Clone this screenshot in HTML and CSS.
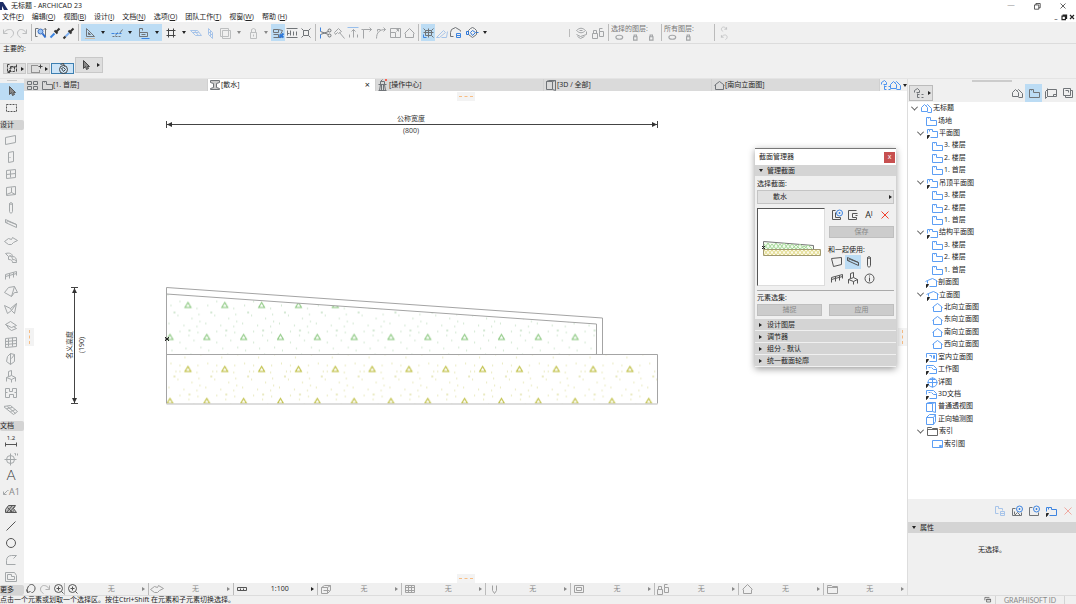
FILE: index.html
```
<!DOCTYPE html>
<html lang="zh-CN">
<head>
<meta charset="utf-8">
<title>无标题 - ARCHICAD 23</title>
<link rel="stylesheet" href="styles.css">
</head>
<body>

<!-- icons, shifted half a pixel so the strokes stay sharp -->
<svg class="defs" width="0" height="0" aria-hidden="true">
  <symbol id="undo" viewBox="-.5 -.5 14 14"><path d="M2 3v4h4M2 7c2-4 5-4 7-4 4 1 4 6 0 8"/></symbol>
  <symbol id="redo" viewBox="-.5 -.5 14 14"><path d="M11 3v4H7M11 7C9 3 6 3 5 3 1 4 1 9 5 11"/></symbol>
  <symbol id="find" viewBox="-.5 -.5 14 14"><path d="M1 2h3M1 2v8h2M11 2v8M9 3l2-1 1 1"/><circle cx="6" cy="5" r="2.500" fill="#9cc4f4" stroke="#3d6fc0"/><path d="M8 7l3 4" stroke="#2f6fd0" stroke-width="2"/></symbol>
  <symbol id="pick" viewBox="-.5 -.5 14 14"><path d="M2 11l4-4" stroke="#3d84e0" stroke-width="2"/><path d="M6 4l3 3M8 5l3-3" stroke="#333" stroke-width="2"/></symbol>
  <symbol id="inject" viewBox="-.5 -.5 14 14"><path d="M3 10l4-4" stroke="#7fb0f0" stroke-width="2"/><path d="M1 12l2-2M6 4l3 3M8 5l3-3" stroke="#333" stroke-width="2"/></symbol>
  <symbol id="ruler" viewBox="-.5 -.5 14 14"><path d="M3 2v8h8zM5 6v2h2z"/><path d="M2 12h10" stroke="#e0a060" stroke-dasharray="1 1"/></symbol>
  <symbol id="guide" viewBox="-.5 -.5 14 14"><path d="M5 9l2-3M9 7l3-4"/><path d="M1 7h10" stroke="#3d84e0" stroke-dasharray="3 1"/><path d="M2 10h8" stroke-dasharray="2 1"/></symbol>
  <symbol id="track" viewBox="-.5 -.5 14 14"><path d="M2 2v8M2 6h8v4H2zM4 8h4M2 2h3v2"/><path d="M4 12h8" stroke="#3d84e0"/></symbol>
  <symbol id="grid" viewBox="-.5 -.5 14 14"><path d="M4 2v9M9 2v9M2 4h9M2 9h9"/></symbol>
  <symbol id="skewh" viewBox="-.5 -.5 14 14"><path d="M1 4h7l4 5H6zM3 6h6M5 4l4 5"/></symbol>
  <symbol id="skewv" viewBox="-.5 -.5 14 14"><path d="M5 2l4 4v6L5 8zM5 5l4 4M7 4v6"/></symbol>
  <symbol id="frame" viewBox="-.5 -.5 14 14"><path d="M1 2h8v8H1zM3 4v8h8V4z"/></symbol>
  <symbol id="lock" viewBox="-.5 -.5 14 14"><path d="M4 6h6v6H4zM5 6V3l2-1 2 1v3M7 8v2"/></symbol>
  <symbol id="trace" viewBox="-.5 -.5 14 14"><path d="M2 3h5v3H2zM2 11h8M7 3l4 1-2 4M2 8h5v3"/><path d="M8 8l4 3M8 11l4-4" stroke="#2f78d8" stroke-width="2"/></symbol>
  <symbol id="measure" viewBox="-.5 -.5 14 14"><path d="M1 2h11M1 11h11M2 4v5M5 4v5M2 7h2M8 5v4M11 5v4"/></symbol>
  <symbol id="cross" viewBox="-.5 -.5 14 14"><path d="M2 2l2 2M11 2L9 4M2 11l2-2M11 11L9 9M4 4h5v5H4z"/></symbol>
  <symbol id="scissors" viewBox="-.5 -.5 14 14"><path d="M2 8l8-3M2 5l8 3"/><circle cx="11" cy="4" r="1.500"/><circle cx="11" cy="9" r="1.500"/><path d="M2 1v4M2 8v4" stroke="#3d84e0"/></symbol>
  <symbol id="axe" viewBox="-.5 -.5 14 14"><path d="M2 6l4-4 3 3-3 2-1-1-2 2zM7 6l5 6"/></symbol>
  <symbol id="adjust" viewBox="-.5 -.5 14 14"><path d="M1 1h11" stroke="#5f9fea"/><path d="M7 3v8M5 5l2-2 2 2M3 8v3M11 8v3"/></symbol>
  <symbol id="corner" viewBox="-.5 -.5 14 14"><path d="M3 12V3h8M9 1l2 2-2 2M1 3h2"/></symbol>
  <symbol id="fillet" viewBox="-.5 -.5 14 14"><path d="M2 12c0-6 3-9 9-9M9 1l2 2-2 2M3 5V3h3"/></symbol>
  <symbol id="resize" viewBox="-.5 -.5 14 14"><path d="M2 2h10v9H2zM2 6h5v5M8 5l2-2M8 3h2v2"/></symbol>
  <symbol id="home" viewBox="-.5 -.5 14 14"><path d="M2 7l5-5 5 5M3 7v4h8V7"/></symbol>
  <symbol id="group" viewBox="-.5 -.5 14 14"><path d="M4 4h6v5H4zM2 2l2 2M12 2l-2 2M12 11l-2-2M7 2v9M2 6h10"/><path d="M2 8v3h3" stroke="#3d84e0"/></symbol>
  <symbol id="pencil" viewBox="-.5 -.5 14 14"><path d="M1 11l7-7 2 2-6 5zM6 11h5l1-6"/></symbol>
  <symbol id="cloud" viewBox="-.5 -.5 14 14"><path d="M4 10H1V6l1-3 4-2 5 3v1"/><path d="M7 7h4v4H7zM7 9h4" stroke="#3d84e0"/></symbol>
  <symbol id="gear" viewBox="-.5 -.5 14 14"><path d="M7 1l2 1 2 2v4l-4 3-4-3V4l2-2z"/><path d="M1 5h2v3H1zM7 4l3 2-3 3-2-3zM11 6h2" stroke="#2f78d8"/></symbol>
  <symbol id="eye" viewBox="-.5 -.5 14 14"><path d="M2 4c3-3 6-3 9 0-3 3-6 3-9 0zM5 4h3M2 8l4 2 6-2V5M3 10l3 2 4-2"/></symbol>
  <symbol id="locks" viewBox="-.5 -.5 14 14"><path d="M1 7h5v5H1zM2 7V4h3v3M8 5h4v5H8zM8 5V2h3"/></symbol>
  <symbol id="oval" viewBox="-.5 -.5 14 14"><ellipse cx="7" cy="7" rx="6" ry="3.500"/></symbol>
  <symbol id="bulb" viewBox="-.5 -.5 14 14"><path d="M4 6h6v6H4zM5 6V3h4v3"/></symbol>
  <symbol id="arrow" viewBox="-.5 -.5 14 14"><path d="M5 2v8l2-2 1 3 2-1-1-2h2z" fill="#888"/></symbol>
  <symbol id="marquee" viewBox="-.5 -.5 14 14"><path d="M2 3h10v7H2z" stroke-dasharray="2 1"/></symbol>
  <symbol id="seln" viewBox="-.5 -.5 14 14"><path d="M2 2v8h2M2 2h2M5 4h4v5H5zM4 6l7-2M11 2v8" stroke-dasharray="3 1"/><path d="M3 10l2-2" stroke-width="2"/></symbol>
  <symbol id="marqadd" viewBox="-.5 -.5 14 14"><path d="M8 3H2v7h8V7" stroke-dasharray="1 1"/><path d="M9 4h4M11 2v4"/></symbol>
  <symbol id="rotate" viewBox="-.5 -.5 14 14"><circle cx="7" cy="7" r="4"/><path d="M5 6l2-1 2 2-2 2zM4 2l3-1 1 3"/></symbol>
  <symbol id="wall" viewBox="-.5 -.5 14 14"><path d="M1 4l10-2v7L1 11z"/></symbol>
  <symbol id="wall2" viewBox="-.5 -.5 14 14"><path d="M1 3l10-1v7L3 11z"/></symbol>
  <symbol id="door" viewBox="-.5 -.5 14 14"><path d="M4 2l5-1v10l-5 1zM5 7h1"/></symbol>
  <symbol id="window" viewBox="-.5 -.5 14 14"><path d="M2 3l9-1v8l-9 1zM6 3v7M2 7l9-1"/></symbol>
  <symbol id="cornerwin" viewBox="-.5 -.5 14 14"><path d="M2 3l9-1v8l-9 1zM7 3v5M2 10l5-2 4 2"/></symbol>
  <symbol id="column" viewBox="-.5 -.5 14 14"><path d="M5 2v8c0 2 3 2 3 0V2c0-1-3-1-3 0 0 1 3 1 3 0"/></symbol>
  <symbol id="beam" viewBox="-.5 -.5 14 14"><path d="M1 2l11 5v3L1 5zM1 5l3-1 8 3"/></symbol>
  <symbol id="slab" viewBox="-.5 -.5 14 14"><path d="M0 7l4-3 3 1 1-2 5 3-4 2-2 2H4z"/></symbol>
  <symbol id="stair" viewBox="-.5 -.5 14 14"><path d="M1 2c4-1 7 0 7 3 3 0 4 2 4 5M1 2l3 3c3-1 4 1 4 3 3 0 4 1 4 3H8C8 9 7 8 4 8V5M5 4l3 1"/></symbol>
  <symbol id="rail" viewBox="-.5 -.5 14 14"><path d="M1 6l11-3M1 6v5M5 5v5M9 4v5M12 3v4M1 8l11-3"/></symbol>
  <symbol id="roof" viewBox="-.5 -.5 14 14"><path d="M0 7l4-5 6-1 3 6h-3l-3 4zM10 1L7 11"/></symbol>
  <symbol id="shell" viewBox="-.5 -.5 14 14"><path d="M0 3l6 3 6-5-2 10-3-3-4 3zM6 6l1 2M12 1L7 8"/></symbol>
  <symbol id="skylight" viewBox="-.5 -.5 14 14"><path d="M1 5l5-3 6 4-5 2zM3 8l4 3 5-2-3-2M1 5l3 3"/></symbol>
  <symbol id="curtain" viewBox="-.5 -.5 14 14"><path d="M1 3l11-1v9L1 12zM4 3v8M8 2v9M1 6l11-1M1 9l11-1"/></symbol>
  <symbol id="morph" viewBox="-.5 -.5 14 14"><path d="M6 1l4 1v7l-4 3-4-3 1-5zM6 1v11M10 2L7 6"/></symbol>
  <symbol id="chair" viewBox="-.5 -.5 14 14"><path d="M4 7V2l3-1v5M2 12V8l5-2 4 2v4M2 8l5 2 4-2M7 10v3"/></symbol>
  <symbol id="zone" viewBox="-.5 -.5 14 14"><path d="M1 2h4v3h3V2h4v9H9V8H5v3H1zM1 6h2M10 6h2"/></symbol>
  <symbol id="mesh" viewBox="-.5 -.5 14 14"><path d="M-1 3l7-1 7 6-4 3zM2 5l6-1M6 8l5-2M3 3l8 7"/></symbol>
  <symbol id="dim" viewBox="-.5 -.5 14 14"><path d="M1 9h11M1 7v4M12 7v4"/></symbol>
  <symbol id="level" viewBox="-.5 -.5 14 14"><circle cx="6" cy="7" r="4"/><path d="M6 1v12M0 7h12M10 1h1v2M13 1v2"/></symbol>
  <symbol id="leader" viewBox="-.5 -.5 7 14"><path d="M6 5H5L1 9M1 6v3h3"/></symbol>
  <symbol id="hatch" viewBox="-.5 -.5 14 14"><path d="M1 10V7l3-4h7L9 6l3 4z" fill="#bbb"/><path d="M2 10l6-7M5 10l5-6M8 10l1-2M3 5l5 5"/></symbol>
  <symbol id="line" viewBox="-.5 -.5 14 14"><path d="M2 11l9-9"/></symbol>
  <symbol id="circle" viewBox="-.5 -.5 14 14"><circle cx="6.500" cy="6.500" r="4.500"/></symbol>
  <symbol id="poly" viewBox="-.5 -.5 14 14"><path d="M11 11H2V7c0-3 2-5 5-5h5l-3 3"/></symbol>
  <symbol id="drawing" viewBox="-.5 -.5 14 14"><path d="M1 2h9l2 3v6H1zM3 4h4v2h3v3H3z"/></symbol>
  <symbol id="tabs" viewBox="-.5 -.5 14 14"><path d="M2 3h4v3H2zM8 3h4v3H8zM2 8h4v3H2zM8 8h4v3H8z"/></symbol>
  <symbol id="plan" viewBox="-.5 -.5 14 14"><path d="M2 3h4v3h6v5H2zM4 3v1"/></symbol>
  <symbol id="planlink" viewBox="-.5 -.5 14 14"><path d="M4 3h3v2h5v6H5M2 7V3h2v2"/><path d="M2 12V9h2z" stroke="#222" fill="#222"/></symbol>
  <symbol id="ibeam" viewBox="-.5 -.5 14 14"><path d="M2 2h9v2L8 5v4l3 1v1H2v-1l3-1V5L2 4z" fill="#ccc"/></symbol>
  <symbol id="tower" viewBox="-.5 -.5 14 14"><path d="M4 3h4v3l1 6H3l1-6zM2 6h8M2 12h8M5 6v6M7 6v6M4 3l2-2"/><path d="M9 1h1v1H9z" fill="#f43" stroke="#f43"/></symbol>
  <symbol id="persp" viewBox="-.5 -.5 14 14"><path d="M2 3h6v8H2zM8 3l3-1v10l-3-1M2 3l2-1h7"/></symbol>
  <symbol id="elev" viewBox="-.5 -.5 14 14"><path d="M3 11V6l4-3 4 3v5zM2 7l1-1M11 6l1 1"/></symbol>
  <symbol id="elevlink" viewBox="-.5 -.5 14 14"><path d="M3 8V5l5-2 4 2v6H5M1 6l2-1M12 5l1 1"/><path d="M2 12V9h2z" stroke="#222" fill="#222"/></symbol>
  <symbol id="project" viewBox="-.5 -.5 14 14"><path d="M2 10V6l3-3 3 3v4zM7 4l1-1 4 4v4H8"/></symbol>
  <symbol id="iso" viewBox="-.5 -.5 14 14"><path d="M2 5h7v7H2zM2 5l3-3h6v7l-2 3M9 5l2-3"/></symbol>
  <symbol id="interior" viewBox="-.5 -.5 14 14"><path d="M2 7V3h10v8H5M5 5h2v2M9 5h1v3H9z"/><path d="M2 12V9h2z" stroke="#222" fill="#222"/></symbol>
  <symbol id="detail" viewBox="-.5 -.5 14 14"><circle cx="8" cy="7" r="4.500"/><path d="M3 7h10M8 2v10M5 4h6"/><path d="M2 12V9h2z" stroke="#222" fill="#222"/></symbol>
  <symbol id="work" viewBox="-.5 -.5 14 14"><path d="M2 7V3h7l3 3v5H5M7 5l2 2h3M4 5h2"/><path d="M2 12V9h2z" stroke="#222" fill="#222"/></symbol>
  <symbol id="folder" viewBox="-.5 -.5 14 14"><path d="M2 4V3h4l1 1h5v7H2zM2 5h10"/></symbol>
  <symbol id="index" viewBox="-.5 -.5 14 14"><path d="M2 3h10v7H2zM9 8h2v1H9z"/></symbol>
  <symbol id="layout" viewBox="-.5 -.5 14 14"><path d="M3 2v8h9V3H3L1 5v7l2-2M9 10V8h3"/></symbol>
  <symbol id="book" viewBox="-.5 -.5 14 14"><path d="M2 2h7v7H2zM4 9v2h7V4H9M4 4h3v2"/></symbol>
  <symbol id="navtree" viewBox="-.5 -.5 14 14"><path d="M2 6V4l3-2 2 2v2H4M5 7v4h2M5 8h2M9 8h2M9 11h2"/></symbol>
  <symbol id="addcopy" viewBox="-.5 -.5 14 14"><path d="M5 2H2v9h8V9H5V4"/><circle cx="9" cy="4.500" r="3" stroke="#3d84e0"/><path d="M8 4.500h2M9 3.500v2" stroke="#3d84e0"/></symbol>
  <symbol id="newview" viewBox="-.5 -.5 14 14"><path d="M2 4v7h9V8M2 4h3M4 11l3-3 3 3M4 7v3"/><circle cx="9" cy="4.500" r="3" stroke="#3d84e0"/><path d="M8 4.500h2M9 3.500v2" stroke="#3d84e0"/></symbol>
  <symbol id="newfolder" viewBox="-.5 -.5 14 14"><path d="M5 3H2v8h9V8"/><circle cx="9" cy="4.500" r="3" stroke="#3d84e0"/><path d="M8 4.500h2M9 3.500v2" stroke="#3d84e0"/></symbol>
  <symbol id="dup" viewBox="-.5 -.5 14 14"><path d="M10 2H2v9h8V9H6V5h5M9 7h2"/></symbol>
  <symbol id="x" viewBox="-.5 -.5 14 14"><path d="M3 3l7 7M10 3l-7 7"/></symbol>
  <symbol id="info" viewBox="-.5 -.5 14 14"><circle cx="7" cy="7" r="4.500"/><path d="M7 4v1M7 6v4"/></symbol>
  <symbol id="loop" viewBox="-.5 -.5 14 14"><path d="M2 7l1 3 3-1M3 10C2 6 4 2 7 2c4 0 5 6 1 8H7"/></symbol>
  <symbol id="zoomin" viewBox="-.5 -.5 14 14"><circle cx="6" cy="6" r="4"/><path d="M9 9l2 2M6 4v4M4 6h4"/></symbol>
  <symbol id="scale" viewBox="-.5 -.5 14 14"><path d="M2 5h9v3H2zM5 6v2M8 6v2"/></symbol>
  <symbol id="layers" viewBox="-.5 -.5 14 14"><path d="M2 5h6v6H2zM2 5l3-2h6L8 5M11 3v5l-3 3M4 8h6"/></symbol>
  <symbol id="setview" viewBox="-.5 -.5 14 14"><path d="M5 9H2V2h3v2h4v2M7 7h4v4H7zM7 9h4"/></symbol>
  <symbol id="pens" viewBox="-.5 -.5 14 14"><path d="M2 3h9v7H2zM2 5h9M2 8h9M5 3v7M8 3v7"/></symbol>
  <symbol id="pen" viewBox="-.5 -.5 14 14"><path d="M5 3v5l2 3 2-3V3"/></symbol>
  <symbol id="rects" viewBox="-.5 -.5 14 14"><path d="M2 3h9v7H2zM4 5h5v3H4z"/></symbol>
  <symbol id="windows" viewBox="-.5 -.5 14 14"><path d="M4 5h7v5H4zM1 7V2h8M4 6h7"/></symbol>
  <symbol id="restore" viewBox="-.5 -.5 14 14"><path d="M3 5h6v6H3zM5 5V3h6v6H9"/></symbol>
</svg>

<header class="titlebar">
  <svg class="logo" viewBox="0 0 8 10"><path d="M0 9V1h3l5 8H4L2 5v4z"/></svg>
  <h1>无标题 - ARCHICAD 23</h1>
  <div class="winctl">
    <button aria-label="最小化">─</button>
    <button aria-label="还原"><svg><use href="#restore"/></svg></button>
    <button aria-label="关闭"><svg><use href="#x"/></svg></button>
  </div>
</header>

<nav class="menubar">
  <button>文件(<u>F</u>)</button>
  <button>编辑(<u>O</u>)</button>
  <button>视图(<u>B</u>)</button>
  <button>设计(<u>I</u>)</button>
  <button>文档(<u>N</u>)</button>
  <button>选项(<u>O</u>)</button>
  <button>团队工作(<u>T</u>)</button>
  <button>视窗(<u>W</u>)</button>
  <button>帮助 (<u>H</u>)</button>
  <div class="docctl">
    <button aria-label="最小化文档"><b>_</b></button>
    <button aria-label="还原文档"><svg><use href="#restore"/></svg></button>
    <button aria-label="关闭文档"><svg><use href="#x"/></svg></button>
  </div>
</nav>

<div class="toolbar">
  <button class="dim" aria-label="撤销"><svg><use href="#undo"/></svg></button>
  <button class="dim" aria-label="重做"><svg><use href="#redo"/></svg></button>
  <i class="sep"></i>
  <button aria-label="查找"><svg><use href="#find"/></svg></button>
  <button aria-label="拾取参数"><svg><use href="#pick"/></svg></button>
  <button aria-label="注入参数"><svg><use href="#inject"/></svg></button>
  <i class="sep"></i>
  <button class="pair on" aria-label="标尺"><svg><use href="#ruler"/></svg><i class="down"></i></button>
  <button class="pair on" aria-label="辅助线"><svg><use href="#guide"/></svg><i class="down"></i></button>
  <button class="pair on" aria-label="追踪器"><svg><use href="#track"/></svg><i class="down"></i></button>
  <button class="pair dark" aria-label="网格"><svg><use href="#grid"/></svg><i class="down"></i></button>
  <button class="dim blue" aria-label="编辑平面"><svg><use href="#skewh"/></svg></button>
  <button class="dim blue" aria-label="垂直平面"><svg><use href="#skewv"/></svg></button>
  <button class="pair dim" aria-label="框"><svg><use href="#frame"/></svg><i class="down"></i></button>
  <button class="pair dim" aria-label="锁定"><svg><use href="#lock"/></svg><i class="down"></i></button>
  <button class="on" aria-label="描绘"><svg><use href="#trace"/></svg></button>
  <button aria-label="测量"><svg><use href="#measure"/></svg></button>
  <button aria-label="交叉"><svg><use href="#cross"/></svg></button>
  <i class="sep"></i>
  <button aria-label="修剪"><svg><use href="#scissors"/></svg></button>
  <button class="mid" aria-label="分割"><svg><use href="#axe"/></svg></button>
  <button class="mid" aria-label="调整"><svg><use href="#adjust"/></svg></button>
  <button class="mid" aria-label="相交"><svg><use href="#corner"/></svg></button>
  <button class="mid" aria-label="圆角"><svg><use href="#fillet"/></svg></button>
  <button class="mid" aria-label="调整大小"><svg><use href="#resize"/></svg></button>
  <button class="mid" aria-label="屋顶修剪"><svg><use href="#home"/></svg></button>
  <i class="sep"></i>
  <button class="on" aria-label="编组"><svg><use href="#group"/></svg></button>
  <button class="dim blue" aria-label="编辑"><svg><use href="#pencil"/></svg></button>
  <button aria-label="收藏"><svg><use href="#cloud"/></svg></button>
  <button class="pair" aria-label="设置"><svg><use href="#gear"/></svg><i class="down"></i></button>
  <i class="sep far"></i>
  <button class="mid wide" aria-label="图层显示"><svg><use href="#eye"/></svg></button>
  <button class="mid wide" aria-label="图层锁定"><svg><use href="#locks"/></svg></button>
  <i class="sep"></i>
  <div class="layerset">
    <span>选择的图层:</span>
    <div><svg><use href="#oval"/></svg><svg><use href="#bulb"/></svg><svg><use href="#bulb"/></svg></div>
  </div>
  <i class="sep"></i>
  <div class="layerset">
    <span>所有图层:</span>
    <div><svg><use href="#oval"/></svg><svg><use href="#bulb"/></svg></div>
  </div>
  <i class="sep"></i>
  <div class="stack"><svg><use href="#redo"/></svg><svg><use href="#undo"/></svg></div>
</div>

<div class="infobox">
  <span>主要的:</span>
  <div class="infobtns">
    <button aria-label="选择方式"><svg><use href="#seln"/></svg><i class="right"></i></button>
    <button aria-label="选取框"><svg><use href="#marqadd"/></svg><i class="right"></i></button>
    <button class="active" aria-label="快速选择"><svg><use href="#rotate"/></svg></button>
    <button class="big" aria-label="箭头"><svg><use href="#arrow"/></svg><i class="right"></i></button>
  </div>
</div>

<main class="work">
  <aside class="toolbox">
    <i class="grip"></i>
    <button class="on" aria-label="箭头"><svg><use href="#arrow"/></svg></button>
    <button class="dark" aria-label="选取框"><svg><use href="#marquee"/></svg></button>
    <h2>设计</h2>
    <button aria-label="墙"><svg><use href="#wall"/></svg></button>
    <button aria-label="门"><svg><use href="#door"/></svg></button>
    <button aria-label="窗"><svg><use href="#window"/></svg></button>
    <button aria-label="转角窗"><svg><use href="#cornerwin"/></svg></button>
    <button aria-label="柱"><svg><use href="#column"/></svg></button>
    <button aria-label="梁"><svg><use href="#beam"/></svg></button>
    <button aria-label="板"><svg><use href="#slab"/></svg></button>
    <button aria-label="楼梯"><svg><use href="#stair"/></svg></button>
    <button aria-label="栏杆"><svg><use href="#rail"/></svg></button>
    <button aria-label="屋顶"><svg><use href="#roof"/></svg></button>
    <button aria-label="壳体"><svg><use href="#shell"/></svg></button>
    <button aria-label="天窗"><svg><use href="#skylight"/></svg></button>
    <button aria-label="幕墙"><svg><use href="#curtain"/></svg></button>
    <button aria-label="变形体"><svg><use href="#morph"/></svg></button>
    <button aria-label="对象"><svg><use href="#chair"/></svg></button>
    <button aria-label="区域"><svg><use href="#zone"/></svg></button>
    <button aria-label="网面"><svg><use href="#mesh"/></svg></button>
    <h2>文档</h2>
    <button class="dark dimtool"><span>1.2</span><svg><use href="#dim"/></svg></button>
    <button aria-label="标高标注"><svg><use href="#level"/></svg></button>
    <button class="dark letter">A</button>
    <button class="label"><svg><use href="#leader"/></svg>A1</button>
    <button class="dark" aria-label="填充"><svg><use href="#hatch"/></svg></button>
    <button class="dark" aria-label="线"><svg><use href="#line"/></svg></button>
    <button class="dark" aria-label="圆"><svg><use href="#circle"/></svg></button>
    <button aria-label="多段线"><svg><use href="#poly"/></svg></button>
    <button aria-label="图形"><svg><use href="#drawing"/></svg></button>
    <h2 class="last">更多</h2>
  </aside>

  <section class="center">
    <div class="tabs">
      <button class="all" aria-label="标签概览"><svg><use href="#tabs"/></svg></button>
      <button class="tab"><svg><use href="#plan"/></svg>[1. 首层]</button>
      <button class="tab current"><svg><use href="#ibeam"/></svg>[散水]<span>×</span></button>
      <button class="tab"><svg><use href="#tower"/></svg>[操作中心]</button>
      <button class="tab"><svg><use href="#persp"/></svg>[3D / 全部]</button>
      <button class="tab"><svg><use href="#elev"/></svg>[南向立面图]</button>
      <button class="more" aria-label="弹出式浏览器"><svg><use href="#navtree"/></svg><svg><use href="#project"/></svg><i class="down"></i></button>
    </div>

    <div class="canvas">
      <svg class="drawing" viewBox="24 91 883 492" preserveAspectRatio="xMinYMin slice">
        <defs>
          <pattern id="gravel" x="166.500" y="297.500" width="36.830" height="64" patternUnits="userSpaceOnUse">
            <path class="tri" d="M18.500 10h6l-3-5zM.5 42h6l-3-5z"/>
            <path class="dot" d="M4 8h1M13 4h1M30 11h1M11 18h1M25 21h1M2 26h1M17 28h1M33 24h1M13 34h1M22 38h1M31 35h1M13 45h1M27 43h1M5 53h1M19 51h1M34 50h1M24 57h1M12 60h1M30 62h1M1 61h1M7 15h2M32 17h1M22 33h2M30 29h1"/>
          </pattern>
          <pattern id="sand" x="166.500" y="361.500" width="36.830" height="64" patternUnits="userSpaceOnUse">
            <path class="tri2" d="M18.500 10h6l-3-5zM.5 42h6l-3-5z"/>
            <path class="dot2" d="M4 2h1M13 4h1M30 11h1M11 18h1M25 21h1M2 26h1M17 28h1M33 24h1M13 34h1M22 38h1M31 35h1M13 10h1M9 10h1M27 43h1M31 4h1M7 15h2M32 17h1M22 33h2M30 29h1M34 57h1M18 60h1"/>
          </pattern>
        </defs>
        <path class="fill" fill="url(#gravel)" d="M166.500 294L596.500 324v30.500h-430z"/>
        <path class="fill" fill="url(#sand)" d="M166.500 354.500h491v49h-491z"/>
        <path class="edge" d="M166.500 403.500v-116L602.500 318v36.500M166.500 294L596.500 324v30.500M166.500 354.500h491v49"/>
        <path class="edge soft" d="M166.500 404h491"/>
        <path class="dimline" d="M166.500 121v7M657.500 121v7M167 124.500h490M71 287.500h7M71 403.500h7M74.500 288v115"/>
        <path class="tip" d="M167 124.500l5-2.500v5zM657 124.500l-5-2.500v5zM74.500 288l-2.500 5h5zM74.500 403l-2.500-5h5z"/>
        <path class="origin" d="M165 337l4 4M169 337l-4 4M165 339h4"/>
        <text x="411" y="121" text-anchor="middle">公称宽度</text>
        <text x="411" y="133" text-anchor="middle">(800)</text>
        <text transform="translate(72 345) rotate(-90)" text-anchor="middle">名义高度</text>
        <text transform="translate(84 345) rotate(-90)" text-anchor="middle">(190)</text>
      </svg>
      <i class="handle top"></i>
      <i class="handle bottom"></i>
      <i class="handle left"></i>
      <i class="handle rt"></i>

      <section class="palette">
        <header><h2>截面管理器</h2><button aria-label="关闭">x</button></header>
        <h3 class="open">管理截面</h3>
        <div class="pbody">
          <label for="profile">选择截面:</label>
          <div class="pick">
            <select id="profile"><option>散水</option></select>
            <i class="right"></i>
          </div>
          <div class="cols">
            <div class="preview">
              <svg viewBox="0 0 66 76">
                <path class="pv1" d="M5.500 32.500l50 4v4h-50z"/>
                <path class="pv2" d="M5.500 40.500h57v6h-57z"/>
                <path class="pv3" d="M6 40l4-6 4 6 4-6 4 6 4-6 4 6 4-5 4 5 4-5 4 5 4-4 4 4M6 35l4 5 4-5 4 5 4-5 4 5 4-5 4 5 4-4 4 4 4-3 4 3"/>
                <path class="pv4" d="M6 46l4-5 4 5 4-5 4 5 4-5 4 5 4-5 4 5 4-5 4 5 4-5 4 5 4-5 4 5M6 41l4 5 4-5 4 5 4-5 4 5 4-5 4 5 4-5 4 5 4-5 4 5 4-5 4 5 4-5"/>
                <path class="origin" d="M4 37l3 3M7 37l-3 3"/>
              </svg>
            </div>
            <div class="side">
              <div class="row">
                <button aria-label="新建"><svg><use href="#addcopy"/></svg></button>
                <button aria-label="复制"><svg><use href="#dup"/></svg></button>
                <button class="rename">A<sup>I</sup></button>
                <button class="red" aria-label="删除"><svg><use href="#x"/></svg></button>
              </div>
              <button class="push" disabled>保存</button>
              <span>和一起使用:</span>
              <div class="row">
                <button aria-label="墙"><svg><use href="#wall2"/></svg></button>
                <button class="on" aria-label="梁"><svg><use href="#beam"/></svg></button>
                <button aria-label="柱"><svg><use href="#column"/></svg></button>
              </div>
              <div class="row">
                <button aria-label="栏杆"><svg><use href="#rail"/></svg></button>
                <button aria-label="对象"><svg><use href="#chair"/></svg></button>
                <button aria-label="信息"><svg><use href="#info"/></svg></button>
              </div>
            </div>
          </div>
          <hr>
          <span>元素选集:</span>
          <div class="pushes">
            <button class="push" disabled>捕捉</button>
            <button class="push" disabled>应用</button>
          </div>
        </div>
        <h3>设计图层</h3>
        <h3>调节器</h3>
        <h3>组分 - 默认</h3>
        <h3>统一截面轮廓</h3>
      </section>
    </div>

    <div class="quickbar">
      <div class="zooms">
        <button aria-label="上一视图"><svg><use href="#loop"/></svg></button>
        <button class="dim" aria-label="下一视图"><svg><use href="#redo"/></svg></button>
        <button aria-label="放大"><svg><use href="#zoomin"/></svg></button>
      </div>
      <button class="opt"><svg class="dk"><use href="#zoomin"/></svg><span>无</span><i class="right"></i></button>
      <button class="opt"><svg><use href="#slab"/></svg><span>无</span><i class="right"></i></button>
      <button class="opt live"><svg><use href="#scale"/></svg><span>1:100</span><i class="right"></i></button>
      <button class="opt"><svg><use href="#layers"/></svg><span>无</span><i class="right"></i></button>
      <button class="opt"><svg><use href="#pens"/></svg><span>无</span><i class="right"></i></button>
      <button class="opt"><svg><use href="#pen"/></svg><span>无</span><i class="right"></i></button>
      <button class="opt"><svg><use href="#rects"/></svg><span>无</span><i class="right"></i></button>
      <button class="opt"><svg><use href="#locks"/></svg><span>无</span><i class="right"></i></button>
      <button class="opt"><svg><use href="#home"/></svg><span>无</span><i class="right"></i></button>
      <button class="opt"><svg><use href="#folder"/></svg><span>无</span><i class="right"></i></button>
    </div>
  </section>

  <aside class="navigator">
    <i class="grip"></i>
    <div class="navtop">
      <button class="chooser" aria-label="项目选择器"><svg><use href="#navtree"/></svg><i class="right"></i></button>
      <div class="maps">
        <button aria-label="项目树状图"><svg><use href="#project"/></svg></button>
        <button class="on" aria-label="视图映射"><svg><use href="#plan"/></svg></button>
        <button aria-label="图册"><svg><use href="#layout"/></svg></button>
        <button aria-label="发布器"><svg><use href="#book"/></svg></button>
      </div>
    </div>
    <div class="treebox">
      <ul class="tree">
        <li class="exp"><svg><use href="#project"/></svg>无标题</li>
        <li class="l1"><svg><use href="#plan"/></svg>场地</li>
        <li class="l1 exp"><svg><use href="#planlink"/></svg>平面图</li>
        <li class="l2"><svg><use href="#plan"/></svg>3. 楼层</li>
        <li class="l2"><svg><use href="#plan"/></svg>2. 楼层</li>
        <li class="l2"><svg><use href="#plan"/></svg>1. 首层</li>
        <li class="l1 exp"><svg><use href="#planlink"/></svg>吊顶平面图</li>
        <li class="l2"><svg><use href="#plan"/></svg>3. 楼层</li>
        <li class="l2"><svg><use href="#plan"/></svg>2. 楼层</li>
        <li class="l2"><svg><use href="#plan"/></svg>1. 首层</li>
        <li class="l1 exp"><svg><use href="#planlink"/></svg>结构平面图</li>
        <li class="l2"><svg><use href="#plan"/></svg>3. 楼层</li>
        <li class="l2"><svg><use href="#plan"/></svg>2. 楼层</li>
        <li class="l2"><svg><use href="#plan"/></svg>1. 首层</li>
        <li class="l1"><svg><use href="#elevlink"/></svg>剖面图</li>
        <li class="l1 exp"><svg><use href="#elevlink"/></svg>立面图</li>
        <li class="l2"><svg><use href="#elev"/></svg>北向立面图</li>
        <li class="l2"><svg><use href="#elev"/></svg>东向立面图</li>
        <li class="l2"><svg><use href="#elev"/></svg>南向立面图</li>
        <li class="l2"><svg><use href="#elev"/></svg>西向立面图</li>
        <li class="l1"><svg><use href="#interior"/></svg>室内立面图</li>
        <li class="l1"><svg><use href="#work"/></svg>工作图</li>
        <li class="l1"><svg><use href="#detail"/></svg>详图</li>
        <li class="l1"><svg><use href="#work"/></svg>3D文档</li>
        <li class="l1"><svg><use href="#persp"/></svg>普通透视图</li>
        <li class="l1"><svg><use href="#iso"/></svg>正向轴测图</li>
        <li class="l1 exp grey"><svg><use href="#folder"/></svg>索引</li>
        <li class="l2"><svg><use href="#index"/></svg>索引图</li>
      </ul>
    </div>
    <div class="navacts">
      <button class="dim blue" aria-label="设置"><svg><use href="#setview"/></svg></button>
      <button aria-label="新建视图"><svg><use href="#newview"/></svg></button>
      <button aria-label="新建文件夹"><svg><use href="#newfolder"/></svg></button>
      <button class="blue" aria-label="克隆"><svg><use href="#planlink"/></svg></button>
      <button class="red dim" aria-label="删除"><svg><use href="#x"/></svg></button>
    </div>
    <h3 class="open">属性</h3>
    <p>无选择。</p>
  </aside>
</main>

<footer class="status">
  <span>点击一个元素或划取一个选择区。按住Ctrl+Shift 在元素和子元素切换选择。</span>
  <div class="idbox">
    <svg><use href="#windows"/></svg>
    <a href="#">GRAPHISOFT ID</a>
  </div>
</footer>

</body>
</html>
```
FILE: styles.css
```
* { box-sizing: border-box; }
body {
	margin: 0;
	height: 100vh;
	display: flex;
	flex-direction: column;
	overflow: hidden;
	background: #f0f0f0;
	color: #222;
	font-family: "Open Sans", "Noto Sans CJK SC", sans-serif;
	font-size: 7px;
	line-height: 10px;
	white-space: nowrap;
}
h1, h2, h3, p, ul { margin: 0; padding: 0; font: inherit; }
i { font-style: normal; }
button {
	display: flex;
	align-items: center;
	justify-content: center;
	padding: 0;
	border: 0;
	background: none;
	color: inherit;
	font: inherit;
}
svg {
	display: block;
	flex: none;
	width: 14px;
	height: 14px;
	fill: none;
	stroke: #707478;
}
.defs { position: absolute; width: 0; height: 0; }
.on { background: #bcdcf4; }
.dim svg { opacity: .4; }
.mid svg { opacity: .6; }
.dark svg { stroke: #444; }
.blue svg { stroke: #3d84e0; }
.red svg { stroke: #f0402c; }

/* little triangles */
.down, .right { width: 0; height: 0; flex: none; border: 2px solid transparent; }
.down { border-top: 3px solid #222; border-bottom: 0; }
.right { border-left: 3px solid #222; border-right: 0; }

.titlebar {
	display: flex;
	align-items: center;
	height: 11px;
	background: #fff;
}
.logo { width: 8px; height: 10px; margin-right: 3px; fill: #1c2c66; stroke: none; }
.winctl, .docctl { display: flex; margin-left: auto; }
.winctl button { width: 26px; height: 11px; color: #222; }
.winctl svg { width: 10px; height: 10px; stroke: #222; }
.menubar {
	display: flex;
	gap: 8px;
	height: 11px;
	padding-left: 2px;
	background: #fff;
}
.docctl button { width: 8px; }
.docctl svg { width: 8px; height: 8px; stroke: #222; stroke-width: 2; }

.toolbar {
	display: flex;
	align-items: center;
	height: 22px;
	padding-left: 1px;
	border-bottom: 1px solid #dcdcdc;
}
.toolbar button { width: 14px; height: 17px; flex: none; }
.toolbar .pair { width: 27px; padding-left: 2px; gap: 4px; justify-content: flex-start; }
.toolbar .wide { width: 17px; }
.toolbar .dim .down { opacity: .5; }
.sep { width: 1px; height: 17px; margin: 0 2px; background: #bbb; flex: none; }
.sep.far { margin-left: 79px; height: 8px; }
.layerset { width: 48px; color: #777; line-height: 8px; }
.layerset div { display: flex; gap: 6px; padding-left: 3px; }
.layerset svg { width: 10px; height: 8px; opacity: .6; stroke-width: 2; }
.stack svg { width: 10px; height: 8px; opacity: .5; margin-left: 2px; }

.infobox {
	height: 35px;
	padding-left: 3px;
	border-bottom: 1px solid #e4e4e4;
}
.infobox span { display: block; height: 13px; }
.infobtns { display: flex; align-items: flex-end; gap: 1px; height: 17px; }
.infobtns button {
	width: 23px;
	height: 11px;
	gap: 2px;
	background: #dedede;
	border: 1px solid #c8c8c8;
}
.infobtns svg { stroke: #444; }
.infobtns .active { background: #cce4f7; border-color: #3c7fb1; }
.infobtns .big { width: 28px; height: 16px; align-self: flex-start; gap: 5px; }

.work { flex: 1; display: flex; min-height: 0; }
.toolbox {
	display: flex;
	flex-direction: column;
	width: 24px;
	flex: none;
}
.toolbox button { flex: 1 1 0; min-height: 0; padding-right: 2px; }
.toolbox svg { stroke: #a4a8aa; }
.toolbox .dark svg, .toolbox .on svg { stroke: #555; }
.toolbox h2 {
	height: 10px;
	margin: 3px 0 2px;
	background: #d4d4d4;
	border-radius: 2px;
}
.toolbox h2.last { margin: 0; }
.toolbox .letter { font-family: Lato, sans-serif; font-weight: 300; font-size: 14px; color: #333; }
.toolbox .label { color: #888; font-size: 9px; }
.toolbox .label svg { width: 7px; }
.toolbox .dimtool { flex-direction: column; font-size: 6px; line-height: 6px; }
.dimtool svg { margin-top: -6px; }
.toolbox .grip { height: 4px; }
.grip::before {
	content: "";
	display: block;
	width: 10px;
	height: 1px;
	margin: 1px auto 0;
	background: #ccc;
}

.center { flex: 1; min-width: 0; display: flex; flex-direction: column; background: #fff; }
.tabs { display: flex; height: 12px; background: #dadada; }
.tabs .all { width: 16px; }
.tabs .tab {
	flex: 1;
	justify-content: flex-start;
	border-right: 1px solid #d0d0d0;
}
.tabs .tab.current { background: #fff; }
.tab svg { margin-right: -1px; }
.tab span { margin: 0 5px 0 auto; font-size: 9px; }
.tabs .more { width: 27px; background: #f0f0f0; }
.tabs .more svg { stroke: #4a92f0; }
.more svg:first-child { margin: 0 -5px 0 -2px; }
.more .down { margin-left: 1px; }

.canvas { position: relative; flex: 1; min-height: 0; overflow: hidden; }
.drawing { width: 100%; height: 100%; }
.drawing text { fill: #333; stroke: none; font-size: 7px; }
.tri { stroke: #84c478; }
.dot { stroke: #a8d0a8; }
.tri2 { stroke: #b8b830; }
.dot2 { stroke: #d4d484; }
.fill { stroke: none; }
.edge { stroke: #a4a4a4; }
.edge.soft { stroke: #bbb; }
.dimline { stroke: #444; }
.tip { fill: #333; stroke: none; }
.origin { stroke: #222; }

.handle {
	position: absolute;
	display: flex;
	align-items: center;
	justify-content: center;
	width: 18px;
	height: 9px;
	background: #f3f3f3;
}
.handle::before { content: ""; width: 14px; border-top: 1px dashed #f7bd84; }
.top { top: 1px; left: calc(50% - 9px); }
.bottom { bottom: 0; left: calc(50% - 9px); }
.left, .rt { width: 9px; height: 18px; top: calc(50% - 9px); }
.left { left: 1px; }
.rt { right: 0; }
.left::before, .rt::before { width: 0; height: 14px; border-top: 0; border-left: 1px dashed #f7bd84; }

/* floating palette */
.palette {
	position: absolute;
	top: 57px;
	right: 11px;
	width: 141px;
	background: #f0f0f0;
	border-top: 1px solid #777;
	box-shadow: 0 2px 7px rgba(0, 0, 0, .4);
}
.palette header {
	display: flex;
	align-items: center;
	justify-content: space-between;
	height: 16px;
	padding: 0 1px 0 4px;
	background: #fff;
}
.palette header button { width: 11px; height: 11px; background: #c75050; color: #fff; }
h3 {
	display: flex;
	align-items: center;
	height: 11px;
	gap: 4px;
	padding-left: 4px;
	background: #d4d4d4;
}
h3::before { content: ""; border: 2px solid transparent; border-left: 3px solid #222; border-right: 0; margin-right: 1px; }
h3.open::before { border: 2px solid transparent; border-top: 3px solid #222; border-bottom: 0; margin-right: 0; }
.palette h3 + h3 { margin-top: 1px; }
.palette h3:last-child { margin-bottom: 1px; }
.pbody { display: flex; flex-direction: column; padding: 3px 2px; }
.pick { position: relative; margin-top: 1px; }
.pick select {
	display: block;
	width: 100%;
	height: 14px;
	padding: 0 15px;
	appearance: none;
	background: #e1e1e1;
	border: 1px solid #c4c4c4;
	border-radius: 0;
	color: inherit;
	font: inherit;
}
.pick .right { position: absolute; right: 2px; top: 5px; }
.cols { display: flex; gap: 4px; margin-top: 4px; }
.preview {
	width: 68px;
	height: 78px;
	flex: none;
	background: #fff;
	border: 1px solid #ddd;
	border-top-color: #555;
	border-left-color: #555;
}
.preview svg { width: 66px; height: 76px; }
.pv1 { fill: #f0faec; stroke: #777; }
.pv2 { fill: #fcfae8; stroke: #a09870; }
.pv3 { stroke: #a4d898; }
.pv4 { stroke: #e0d888; }
.side { flex: 1; min-width: 0; display: flex; flex-direction: column; }
.side span { margin: 7px 0 0 -1px; }
.row { display: flex; }
.row button { width: 16px; height: 14px; }
.row svg { stroke: #555; }
.row .red svg { stroke: #f0402c; }
.row + .row { margin-top: 2px; }
.rename { font-size: 9px; }
.rename sup { font-size: 7px; line-height: 7px; margin-bottom: 3px; }
.push {
	height: 12px;
	background: #ccc;
	border: 1px solid #bfbfbf;
	color: #888;
}
.side .push { margin-top: 4px; }
hr { width: 100%; margin: 4px 0 2px; border: 0; border-top: 1px solid #aaa; }
.pushes { display: flex; gap: 7px; margin-top: 1px; }
.pushes .push { flex: 1; }

.quickbar { display: flex; height: 12px; background: #f0f0f0; }
.zooms { display: flex; width: 40px; }
.zooms button { flex: 1; }
.quickbar svg { stroke: #555; }
.opt { flex: 1; padding: 0 3px 0 1px; border-left: 1px solid #bbb; color: #888; }
.opt span { flex: 1; text-align: center; }
.opt svg { opacity: .5; }
.opt .right { opacity: .5; }
.opt svg.dk, .live svg, .live .right { opacity: 1; }
.opt.live { color: #222; }

.navigator {
	display: flex;
	flex-direction: column;
	width: 169px;
	flex: none;
	border-left: 1px solid #ddd;
}
.navigator .grip { height: 5px; }
.navigator .grip::before { width: 40px; height: 2px; }
.navtop { display: flex; justify-content: space-between; height: 18px; }
.chooser { width: 24px; height: 16px; gap: 2px; margin: 1px; background: #e1e1e1; border: 1px solid #bbb; }
.maps { display: flex; }
.maps button { width: 17px; height: 18px; }
.treebox { flex: 1; min-height: 0; background: #fff; overflow: hidden; }
.tree {
	display: grid;
	grid-auto-rows: 1fr;
	height: 348px;
	list-style: none;
}
.tree li { display: flex; align-items: center; min-height: 0; }
.tree li::before { content: ""; width: 4px; height: 4px; margin: 0 2px 0 4px; flex: none; }
.tree .exp::before { border: solid #555; border-width: 0 1px 1px 0; transform: rotate(45deg) translate(-1px, -1px); }
.tree svg { stroke: #5c9ef4; }
.tree .grey svg { stroke: #666; }
.tree .l1 { padding-left: 6px; }
.tree .l2 { padding-left: 12px; }
.navacts { display: flex; justify-content: flex-end; align-items: center; height: 23px; }
.navacts button { width: 17px; }
.navigator p { height: 62px; padding-top: 12px; text-align: center; }

.status {
	display: flex;
	justify-content: space-between;
	height: 9px;
	line-height: 8px;
	border-top: 1px solid #dcdcdc;
}
.idbox { display: flex; align-items: center; padding-right: 11px; }
.idbox svg { height: 8px; stroke: #333; }
.idbox a {
	padding: 0 8px;
	border: solid #d4d4d4;
	border-width: 0 1px;
	color: #888;
	font-family: Lato, sans-serif;
	text-decoration: none;
}
```
